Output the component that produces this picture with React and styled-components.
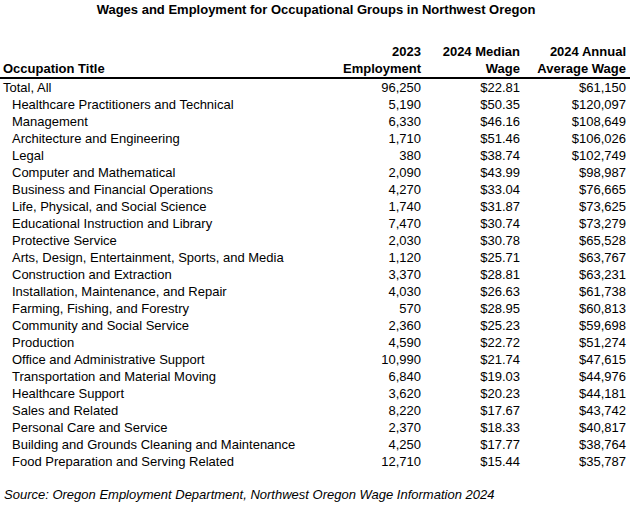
import React from "react";
import styled, { createGlobalStyle } from "styled-components";

const Global = createGlobalStyle`
  html, body { margin: 0; padding: 0; background: #fff; }
  body { font-family: "Liberation Sans", Arial, sans-serif; color: #000; }
`;

const Page = styled.div`
  width: 630px;
  height: 505px;
  box-sizing: border-box;
  padding-top: 1px;
`;

const Title = styled.h1`
  margin: 0;
  font-size: 13px;
  font-weight: bold;
  line-height: 18px;
  text-align: center;
  padding-left: 2px;
`;

const Grid = styled.div`
  margin-top: 24px;
  display: grid;
  grid-template-columns: 336px 85px 99px 106px;
  padding-right: 4px;
  font-size: 13px;
  line-height: 17px;
`;

const HeadCell = styled.div`
  font-weight: bold;
  text-align: ${(p) => (p.$left ? "left" : "right")};
  padding-left: ${(p) => (p.$left ? "3px" : "0")};
  display: flex;
  flex-direction: column;
  justify-content: flex-end;
  align-items: ${(p) => (p.$left ? "flex-start" : "flex-end")};
  border-bottom: 2px solid #000;
  margin-right: ${(p) => (p.$last ? "-4px" : "0")};
  padding-right: ${(p) => (p.$last ? "4px" : "0")};
`;

const Cell = styled.div`
  text-align: ${(p) => (p.$left ? "left" : "right")};
  padding-left: ${(p) => (p.$left ? (p.$indent ? "12px" : "3px") : "0")};
  white-space: nowrap;
`;

const Source = styled.p`
  margin: 16px 0 0 4px;
  font-size: 13px;
  font-style: italic;
  line-height: 17px;
`;

const rows = [
  ["Total, All", "96,250", "$22.81", "$61,150", false],
  ["Healthcare Practitioners and Technical", "5,190", "$50.35", "$120,097", true],
  ["Management", "6,330", "$46.16", "$108,649", true],
  ["Architecture and Engineering", "1,710", "$51.46", "$106,026", true],
  ["Legal", "380", "$38.74", "$102,749", true],
  ["Computer and Mathematical", "2,090", "$43.99", "$98,987", true],
  ["Business and Financial Operations", "4,270", "$33.04", "$76,665", true],
  ["Life, Physical, and Social Science", "1,740", "$31.87", "$73,625", true],
  ["Educational Instruction and Library", "7,470", "$30.74", "$73,279", true],
  ["Protective Service", "2,030", "$30.78", "$65,528", true],
  ["Arts, Design, Entertainment, Sports, and Media", "1,120", "$25.71", "$63,767", true],
  ["Construction and Extraction", "3,370", "$28.81", "$63,231", true],
  ["Installation, Maintenance, and Repair", "4,030", "$26.63", "$61,738", true],
  ["Farming, Fishing, and Forestry", "570", "$28.95", "$60,813", true],
  ["Community and Social Service", "2,360", "$25.23", "$59,698", true],
  ["Production", "4,590", "$22.72", "$51,274", true],
  ["Office and Administrative Support", "10,990", "$21.74", "$47,615", true],
  ["Transportation and Material Moving", "6,840", "$19.03", "$44,976", true],
  ["Healthcare Support", "3,620", "$20.23", "$44,181", true],
  ["Sales and Related", "8,220", "$17.67", "$43,742", true],
  ["Personal Care and Service", "2,370", "$18.33", "$40,817", true],
  ["Building and Grounds Cleaning and Maintenance", "4,250", "$17.77", "$38,764", true],
  ["Food Preparation and Serving Related", "12,710", "$15.44", "$35,787", true],
];

export default function App() {
  return (
    <Page>
      <Global />
      <Title>Wages and Employment for Occupational Groups in Northwest Oregon</Title>
      <Grid>
        <HeadCell $left>Occupation Title</HeadCell>
        <HeadCell>
          <span>2023</span>
          <span>Employment</span>
        </HeadCell>
        <HeadCell>
          <span>2024 Median</span>
          <span>Wage</span>
        </HeadCell>
        <HeadCell $last>
          <span>2024 Annual</span>
          <span>Average Wage</span>
        </HeadCell>
        {rows.map(([t, e, m, a, ind]) => (
          <React.Fragment key={t}>
            <Cell $left $indent={ind}>{t}</Cell>
            <Cell>{e}</Cell>
            <Cell>{m}</Cell>
            <Cell>{a}</Cell>
          </React.Fragment>
        ))}
      </Grid>
      <Source>Source: Oregon Employment Department, Northwest Oregon Wage Information 2024</Source>
    </Page>
  );
}
